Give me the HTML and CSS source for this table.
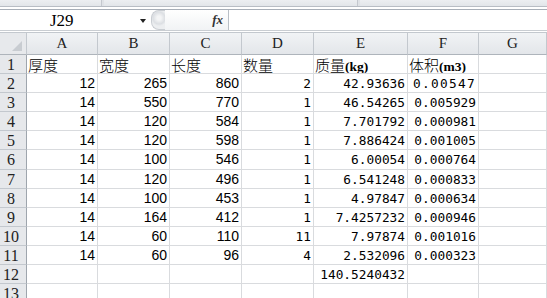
FILE: index.html
```html
<!DOCTYPE html>
<html lang="zh-CN">
<head>
    <meta charset="UTF-8">
    <title>工作表</title>
    <link rel="stylesheet" href="styles.css">
</head>
<body>
    <!-- 功能区底边 -->
    <div class="ribbon">
        <div class="grp g1"></div>
        <div class="grp g2"></div>
        <div class="grp g3"></div>
    </div>

    <!-- 名称框 + 编辑栏 -->
    <div class="formula-bar">
        <div class="name-box">
            <span class="ref">J29</span>
            <span class="arrow"></span>
        </div>
        <div class="splitter"><span class="knob"></span></div>
        <div class="fx-area"><span class="fx">fx</span></div>
        <div class="formula-input"></div>
    </div>

    <div class="sheet">
        <div class="row col-head">
            <div class="corner"><span class="tri"></span></div>
            <div>A</div><div>B</div><div>C</div><div>D</div><div>E</div><div>F</div><div>G</div>
        </div>
        <div class="row">
            <div class="rh">1</div>
            <div class="t">厚度</div><div class="t">宽度</div><div class="t">长度</div><div class="t">数量</div>
            <div class="t">质量<span class="lat">(kg)</span></div><div class="t">体积<span class="lat">(m3)</span></div><div></div>
        </div>
        <div class="row">
            <div class="rh">2</div>
            <div class="n">12</div><div class="n">265</div><div class="n">860</div><div class="m">2</div>
            <div class="m">42.93636</div><div class="m wide">0.00547</div><div></div>
        </div>
        <div class="row">
            <div class="rh">3</div>
            <div class="n">14</div><div class="n">550</div><div class="n">770</div><div class="m">1</div>
            <div class="m">46.54265</div><div class="m">0.005929</div><div></div>
        </div>
        <div class="row">
            <div class="rh">4</div>
            <div class="n">14</div><div class="n">120</div><div class="n">584</div><div class="m">1</div>
            <div class="m">7.701792</div><div class="m">0.000981</div><div></div>
        </div>
        <div class="row">
            <div class="rh">5</div>
            <div class="n">14</div><div class="n">120</div><div class="n">598</div><div class="m">1</div>
            <div class="m">7.886424</div><div class="m">0.001005</div><div></div>
        </div>
        <div class="row">
            <div class="rh">6</div>
            <div class="n">14</div><div class="n">100</div><div class="n">546</div><div class="m">1</div>
            <div class="m">6.00054</div><div class="m">0.000764</div><div></div>
        </div>
        <div class="row">
            <div class="rh">7</div>
            <div class="n">14</div><div class="n">120</div><div class="n">496</div><div class="m">1</div>
            <div class="m">6.541248</div><div class="m">0.000833</div><div></div>
        </div>
        <div class="row">
            <div class="rh">8</div>
            <div class="n">14</div><div class="n">100</div><div class="n">453</div><div class="m">1</div>
            <div class="m">4.97847</div><div class="m">0.000634</div><div></div>
        </div>
        <div class="row">
            <div class="rh">9</div>
            <div class="n">14</div><div class="n">164</div><div class="n">412</div><div class="m">1</div>
            <div class="m">7.4257232</div><div class="m">0.000946</div><div></div>
        </div>
        <div class="row">
            <div class="rh">10</div>
            <div class="n">14</div><div class="n">60</div><div class="n">110</div><div class="m">11</div>
            <div class="m">7.97874</div><div class="m">0.001016</div><div></div>
        </div>
        <div class="row">
            <div class="rh">11</div>
            <div class="n">14</div><div class="n">60</div><div class="n">96</div><div class="m">4</div>
            <div class="m">2.532096</div><div class="m">0.000323</div><div></div>
        </div>
        <div class="row">
            <div class="rh">12</div>
            <div></div><div></div><div></div><div></div>
            <div class="m">140.5240432</div><div></div><div></div>
        </div>
        <div class="row">
            <div class="rh">13</div>
            <div></div><div></div><div></div><div></div><div></div><div></div><div></div>
        </div>
    </div>
</body>
</html>
```

FILE: styles.css
```css
body {
    margin: 0;
    width: 547px;
    height: 298px;
    overflow: hidden;
    background-color: #ffffff;
    font-family: "Liberation Sans", sans-serif;
    color: #000;
}

/* 功能区只露出最下面一条 */
.ribbon {
    display: flex;
    height: 6px;
    background-color: #dfe2e6;
    border-bottom: 1px solid #b8bdc4;
}
.grp {
    height: 6px;
    background: linear-gradient(#eceef1, #e2e5e9);
    border-right: 1px solid #c4c8ce;
}
.g1 { width: 101px; }
.g2 { width: 253px; margin-left: 2px; }
.g3 { flex: 1; margin-left: 2px; border-right: none; }

.formula-bar {
    display: flex;
    height: 20px;
    margin-top: 2px;
    border-top: 1px solid #a7aeb7;
    border-bottom: 1px solid #c9cdd2;
    background-color: #fff;
}
.name-box {
    width: 151px;
    position: relative;
    font-family: "Liberation Serif", serif;
    font-size: 17px;
    line-height: 21px;
}
.name-box .ref {
    position: absolute;
    left: 50px;
    top: 0;
}
.name-box .arrow {
    position: absolute;
    left: 140px;
    top: 9px;
    border-left: 3.5px solid transparent;
    border-right: 3.5px solid transparent;
    border-top: 4px solid #222;
}
.splitter {
    width: 14px;
    display: flex;
    align-items: center;
}
.knob {
    width: 14px;
    height: 18px;
    border-radius: 8px 0 0 8px;
    background: radial-gradient(circle at 7px 7px, #f4f5f6 2px, #dcdfe3 6px, #eceef0 8px);
    border: 1px solid #c9cdd2;
    border-right: none;
}
.fx-area {
    width: 63px;
    background: linear-gradient(#ffffff, #f1f3f5);
    text-align: right;
}
.fx {
    display: inline-block;
    margin-right: 5px;
    font-family: "Liberation Serif", serif;
    font-style: italic;
    font-weight: bold;
    font-size: 13px;
    line-height: 20px;
    color: #333;
}
.formula-input {
    flex: 1;
    border-left: 1px solid #b9bfc6;
}

.sheet {
    margin-top: 1px;
    background-color: #e9ecef;
}

.row {
    display: grid;
    grid-template-columns: 27px 71px 72px 72px 72px 94px 71px 1fr;
    height: 19.1px;
}
.row > div {
    box-sizing: border-box;
    border-right: 1px solid #d9dbde;
    border-bottom: 1px solid #d9dbde;
    background-color: #fff;
    white-space: nowrap;
    overflow: hidden;
    line-height: 19px;
}

/* 列标 */
.row.col-head {
    height: 22px;
    border-top: 1px solid #c3c8ce;
}
.col-head > div {
    background: linear-gradient(#f1f3f5, #e3e6ea);
    border-right: 1px solid #c3c8ce;
    border-bottom: 1px solid #aeb4bb;
    text-align: center;
    font-family: "Liberation Serif", serif;
    font-size: 15px;
    line-height: 20px;
    color: #222;
}
.col-head > .corner {
    position: relative;
    background: #e7e9ec;
}
.tri {
    position: absolute;
    right: 4px;
    bottom: 3px;
    border-left: 10px solid transparent;
    border-bottom: 10px solid #c8ccd1;
}

/* 行号 */
.row > .rh {
    background-color: #e6e8eb;
    border-right: 1px solid #9ea5ad;
    border-bottom: 1px solid #c3c8ce;
    font-family: "Liberation Serif", serif;
    font-size: 16px;
    color: #222;
    padding-right: 4px;
    text-align: center;
    line-height: 20px;
}

.t {
    font-family: "Noto Sans CJK SC", sans-serif;
    font-weight: 300;
    font-size: 15px;
    padding-left: 1px;
}
.lat {
    font-family: "Liberation Serif", serif;
    font-weight: bold;
    font-size: 13.5px;
}
.n {
    text-align: right;
    padding-right: 2px;
    font-size: 14px;
}
.m {
    text-align: right;
    padding-right: 2px;
    font-family: "DejaVu Sans Mono", monospace;
    font-size: 12.8px;
}
.m.wide {
    letter-spacing: 1.3px;
}
```
